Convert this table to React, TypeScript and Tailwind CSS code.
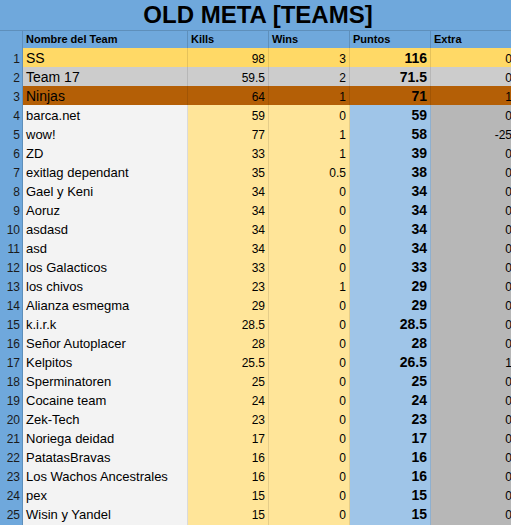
const rows: [string, string, string, string, string][] = [
  ['SS', '98', '3', '116', '0'],
  ['Team 17', '59.5', '2', '71.5', '0'],
  ['Ninjas', '64', '1', '71', '1'],
  ['barca.net', '59', '0', '59', '0'],
  ['wow!', '77', '1', '58', '-25'],
  ['ZD', '33', '1', '39', '0'],
  ['exitlag dependant', '35', '0.5', '38', '0'],
  ['Gael y Keni', '34', '0', '34', '0'],
  ['Aoruz', '34', '0', '34', '0'],
  ['asdasd', '34', '0', '34', '0'],
  ['asd', '34', '0', '34', '0'],
  ['los Galacticos', '33', '0', '33', '0'],
  ['los chivos', '23', '1', '29', '0'],
  ['Alianza esmegma', '29', '0', '29', '0'],
  ['k.i.r.k', '28.5', '0', '28.5', '0'],
  ['Señor Autoplacer', '28', '0', '28', '0'],
  ['Kelpitos', '25.5', '0', '26.5', '1'],
  ['Sperminatoren', '25', '0', '25', '0'],
  ['Cocaine team', '24', '0', '24', '0'],
  ['Zek-Tech', '23', '0', '23', '0'],
  ['Noriega deidad', '17', '0', '17', '0'],
  ['PatatasBravas', '16', '0', '16', '0'],
  ['Los Wachos Ancestrales', '16', '0', '16', '0'],
  ['pex', '15', '0', '15', '0'],
  ['Wisin y Yandel', '15', '0', '15', '0'],
]

const cols = 'grid grid-cols-[23px_165px_81px_81px_81px_84px]'

function rowColors(i: number) {
  if (i === 0) return { name: 'bg-[#ffd966] text-[14px]', stat: 'bg-[#ffd966]', pts: 'bg-[#ffd966]', extra: 'bg-[#ffd966]' }
  if (i === 1) return { name: 'bg-[#cccccc] text-[14px]', stat: 'bg-[#cccccc]', pts: 'bg-[#cccccc]', extra: 'bg-[#cccccc]' }
  if (i === 2) return { name: 'bg-[#b45f06] text-[14px]', stat: 'bg-[#b45f06]', pts: 'bg-[#b45f06]', extra: 'bg-[#b45f06]' }
  return { name: 'bg-[#f3f3f3] text-[13px]', stat: 'bg-[#ffe599]', pts: 'bg-[#9fc5e8]', extra: 'bg-[#b7b7b7]' }
}

export default function App() {
  return (
    <div className="w-[511px] h-[525px] overflow-hidden bg-white font-['Liberation_Sans',Arial,sans-serif] text-black">
      <div className="w-[515px]">
        <div className="h-[31px] bg-[#6fa8dc] border-b border-black/15 flex items-center justify-center pl-[1px]">
          <span className="text-[24px] font-bold leading-none">OLD META [TEAMS]</span>
        </div>

        <div className={`${cols} h-[17px] bg-[#6fa8dc] text-[11px] font-bold`}>
          <div className="border-r border-b border-black/15" />
          <div className="border-r border-b border-black/15 px-[3px] flex items-center">Nombre del Team</div>
          <div className="border-r border-b border-black/15 px-[3px] flex items-center">Kills</div>
          <div className="border-r border-b border-black/15 px-[3px] flex items-center">Wins</div>
          <div className="border-r border-b border-black/15 px-[3px] flex items-center">Puntos</div>
          <div className="border-b border-black/15 px-[3px] flex items-center">Extra</div>
        </div>

        {rows.map((r, i) => {
          const c = rowColors(i)
          return (
            <div key={i} className={`${cols} h-[19px]`}>
              <div className="bg-[#6fa8dc] border-r border-b border-black/15 flex items-center justify-end pr-[2px] text-[12px] text-[#1b1b1b]">
                {i + 1}
              </div>
              <div className={`${c.name} border-r border-b border-black/10 px-[3px] flex items-center whitespace-nowrap`}>
                {r[0]}
              </div>
              <div className={`${c.stat} border-r border-b border-black/10 pr-[3px] flex items-center justify-end text-[12px]`}>
                {r[1]}
              </div>
              <div className={`${c.stat} border-r border-b border-black/10 pr-[3px] flex items-center justify-end text-[12px]`}>
                {r[2]}
              </div>
              <div className={`${c.pts} border-r border-b border-black/10 pr-[3px] flex items-center justify-end text-[14px] font-bold`}>
                {r[3]}
              </div>
              <div className={`${c.extra} border-b border-black/10 pr-[3px] flex items-center justify-end text-[12px]`}>
                {r[4]}
              </div>
            </div>
          )
        })}
      </div>
    </div>
  )
}
